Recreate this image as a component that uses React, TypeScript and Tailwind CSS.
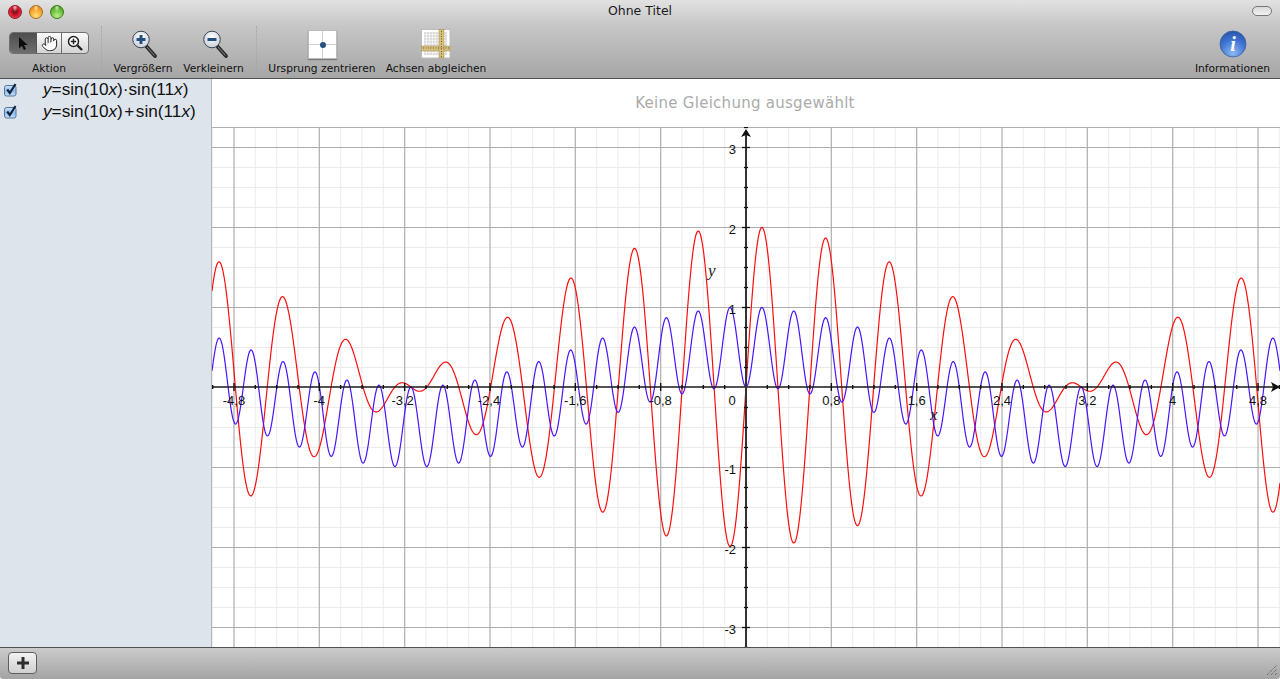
import React from "react";
import { Hand } from "lucide-react";

const X0 = 746, Y0 = 387, UX = 106.67, UY = 80;
const sx = (u: number) => X0 + u * UX;
const sy = (v: number) => Y0 - v * UY;

function curve(f: (x: number) => number) {
  const pts: string[] = [];
  for (let px = 212; px <= 1280; px += 0.5) {
    const u = (px - X0) / UX;
    pts.push(`${px.toFixed(1)},${sy(f(u)).toFixed(2)}`);
  }
  return "M" + pts.join("L");
}

const range = (a: number, b: number) => {
  const r: number[] = [];
  for (let i = a; i <= b; i++) r.push(i);
  return r;
};

function Chart() {
  const xs = range(-25, 25);
  const ys = range(-13, 13);
  const xLabels: [string, number, number][] = [
    ["-4,8", -4.8, 0], ["-4", -4, 0], ["-3,2", -3.2, -2], ["-2,4", -2.4, -1], ["-1,6", -1.6, 0], ["-0,8", -0.8, 0],
    ["0", 0, -14], ["0,8", 0.8, 0], ["1,6", 1.6, 0], ["2,4", 2.4, 0], ["3,2", 3.2, 0], ["4", 4, 0], ["4,8", 4.8, 0],
  ];
  const yLabels: [string, number][] = [["3", 3], ["2", 2], ["1", 1], ["-1", -1], ["-2", -2], ["-3", -3]];
  return (
    <svg className="block w-full h-full" viewBox="212 127 1068 520" preserveAspectRatio="none">
      <rect x="212" y="127" width="1068" height="520" fill="#ffffff" />
      {xs.filter((i) => i % 4 !== 0).map((i) => (
        <line key={i} x1={sx(i * 0.2)} x2={sx(i * 0.2)} y1="127" y2="647" stroke="#f0f0f0" strokeWidth="1.3" />
      ))}
      {ys.filter((i) => i % 4 !== 0).map((i) => (
        <line key={i} y1={sy(i * 0.25) + 0.5} y2={sy(i * 0.25) + 0.5} x1="212" x2="1280" stroke="#eaeaea" strokeWidth="1" />
      ))}
      {xs.filter((i) => i % 4 === 0 && i !== 0).map((i) => (
        <line key={i} x1={sx(i * 0.2)} x2={sx(i * 0.2)} y1="127" y2="647" stroke="#b4b4b4" strokeWidth="1.3" />
      ))}
      {ys.filter((i) => i % 4 === 0 && i !== 0).map((i) => (
        <line key={i} y1={sy(i * 0.25) + 0.5} y2={sy(i * 0.25) + 0.5} x1="212" x2="1280" stroke="#adadad" strokeWidth="1" />
      ))}
      <line x1="212" x2="1280" y1="127.5" y2="127.5" stroke="#b0b0b0" />
      <path d={curve((x) => Math.sin(10 * x) + Math.sin(11 * x))} fill="none" stroke="#ff0d0d" strokeWidth="1.2" />
      <path d={curve((x) => Math.sin(10 * x) * Math.sin(11 * x))} fill="none" stroke="#4a14ff" strokeWidth="1.2" />
      <line x1="212" x2="1276" y1="387" y2="387" stroke="#1a1a1a" strokeWidth="1.6" />
      <line x1="746" x2="746" y1="134" y2="647" stroke="#333333" strokeWidth="2" />
      {xs.filter((i) => i !== 0).map((i) => (
        <line key={i} x1={sx(i * 0.2)} x2={sx(i * 0.2)} y1={i % 4 === 0 ? 383 : 385} y2={i % 4 === 0 ? 391 : 389} stroke="#111111" strokeWidth="1.4" />
      ))}
      {ys.filter((i) => i !== 0).map((i) => (
        <line key={i} y1={sy(i * 0.25) + 0.5} y2={sy(i * 0.25) + 0.5} x1={i % 4 === 0 ? 742 : 744} x2={i % 4 === 0 ? 750 : 748} stroke="#111111" strokeWidth="1.3" />
      ))}
      <polygon points="746,129 741,137 746,135 751,137" fill="#111111" />
      <polygon points="1280,387 1271,382 1273,387 1271,392" fill="#111111" />
      <g className="font-['Liberation_Sans',Arial,sans-serif]" fontSize="13" fill="#111111">
        {xLabels.map(([t, v, dx]) => (
          <text key={t} x={sx(v) + dx} y="405" textAnchor="middle">{t}</text>
        ))}
        {yLabels.map(([t, v]) => (
          <text key={t} x="736" y={sy(v) + 7} textAnchor="end">{t}</text>
        ))}
      </g>
      <g className="font-['Liberation_Serif',serif] italic" fontSize="17" fill="#222222">
        <text x="708" y="276">y</text>
        <text x="930" y="420">x</text>
      </g>
    </svg>
  );
}

function Magnifier({ minus }: { minus?: boolean }) {
  return (
    <svg width="32" height="34" viewBox="-2 0 32 34" className="block">
      <defs>
        <radialGradient id={minus ? "gm" : "gp"} cx="50%" cy="35%" r="70%">
          <stop offset="0%" stopColor="#ffffff" />
          <stop offset="100%" stopColor="#c4ccd6" />
        </radialGradient>
      </defs>
      <line x1="17.5" y1="19.5" x2="26" y2="29" stroke="#2a2a2a" strokeWidth="3.8" strokeLinecap="round" />
      <line x1="18" y1="20" x2="25.5" y2="28.5" stroke="#8a8a8a" strokeWidth="1" />
      <circle cx="12" cy="12.5" r="8.3" fill={`url(#${minus ? "gm" : "gp"})`} stroke="#3c4654" strokeWidth="1" />
      <rect x="7.5" y="11" width="9" height="3" fill="#24507f" />
      {!minus && <rect x="10.5" y="8" width="3" height="9" fill="#24507f" />}
    </svg>
  );
}

function Item({ w, label, children }: { w: string; label: string; children?: React.ReactNode }) {
  return (
    <div className={`flex flex-col items-center ${w}`}>
      <div className="h-[36px] w-full flex items-center justify-center">{children}</div>
      <div className="text-[10.7px] leading-[14px] whitespace-nowrap text-[#111]">{label}</div>
    </div>
  );
}

function Sep() {
  return <div className="h-[46px] w-0 border-l border-dotted border-[#a4a4a4]" />;
}

function Check() {
  return (
    <svg width="15" height="15" viewBox="0 0 15 15" className="block">
      <defs>
        <linearGradient id="cb" x1="0" y1="0" x2="0" y2="1">
          <stop offset="0%" stopColor="#cfe4fa" />
          <stop offset="50%" stopColor="#8bbcec" />
          <stop offset="100%" stopColor="#c7e2fb" />
        </linearGradient>
      </defs>
      <rect x="1.5" y="3.5" width="11.5" height="10.5" rx="2" fill="url(#cb)" stroke="#54759a" strokeWidth="1" />
      <path d="M4.2 7.5 L6.8 11 L12.5 2" fill="none" stroke="#12233c" strokeWidth="2.2" />
    </svg>
  );
}

function Eq({ op }: { op: string }) {
  return (
    <div className="flex items-center h-[22px] pl-[3px]">
      <Check />
      <div className="ml-[25px] text-[17.2px] leading-[22px] whitespace-nowrap text-[#111] font-['Liberation_Sans',Arial,sans-serif]">
        <i>y</i>=sin(10<i>x</i>)<span className={op === "+" ? "px-[1.5px]" : ""}>{op}</span>sin(11<i>x</i>)
      </div>
    </div>
  );
}

export default function App() {
  return (
    <div className="w-[1280px] h-[679px] overflow-hidden rounded-b-[3px] flex flex-col bg-white font-['DejaVu_Sans',sans-serif]">
      <div className="h-[79px] shrink-0 flex flex-col border-b border-[#515151] bg-gradient-to-b from-[#e2e2e2] via-[#c8c8c8] via-30% to-[#a6a6a6]">
        <div className="h-[22px] shrink-0 flex items-center relative">
          <div className="flex items-center gap-[7px] pl-[8px] pt-[1px]">
            <div className="w-[14px] h-[14px] rounded-full border border-[#8a1a22] bg-[radial-gradient(ellipse_at_50%_12%,rgba(255,255,255,0.75),transparent_30%),radial-gradient(circle_at_50%_45%,#8c0f1f_18%,#d9182f_50%,#f0606a)]" />
            <div className="w-[14px] h-[14px] rounded-full border border-[#a8701a] bg-[radial-gradient(ellipse_at_50%_12%,rgba(255,255,255,0.75),transparent_30%),radial-gradient(circle_at_50%_85%,#ffe27a,#f59a1c_65%,#c8780f)]" />
            <div className="w-[14px] h-[14px] rounded-full border border-[#3f7a1a] bg-[radial-gradient(ellipse_at_50%_12%,rgba(255,255,255,0.75),transparent_30%),radial-gradient(circle_at_50%_85%,#b8f08a,#5fb52e_65%,#3a8a1a)]" />
          </div>
          <div className="absolute inset-x-0 top-[3px] text-center text-[12.5px] leading-[16px] text-[#1a1a1a]">Ohne Titel</div>
          <div className="absolute right-[8px] top-[6px] w-[20px] h-[10px] rounded-full border border-[#777] bg-gradient-to-b from-[#d8d8d8] to-[#f2f2f2]" />
        </div>
        <div className="flex-1 flex items-start pl-[9px] pt-[4px] pr-[10px]">
          <Item w="w-[80px]" label="Aktion">
            <div className="w-[80px] h-[22px] mt-[-2px] rounded-[4px] border border-[#6f6f6f] flex overflow-hidden bg-gradient-to-b from-[#fbfbfb] to-[#d4d4d4]">
              <div className="w-[27px] flex items-center justify-center bg-gradient-to-b from-[#4e4e4e] to-[#6e6e6e] border-r border-[#555]">
                <svg width="12" height="15" viewBox="0 0 12 15"><path d="M2 1 L2 12.5 L4.8 9.8 L7 14 L9 13 L7 9 L10.6 9 Z" fill="#0c0c0c" /></svg>
              </div>
              <div className="w-[25px] flex items-center justify-center border-r border-[#6f6f6f]">
                <Hand size={17} strokeWidth={1.4} fill="#ffffff" color="#222222" />
              </div>
              <div className="flex-1 flex items-center justify-center">
                <svg width="16" height="16" viewBox="0 0 16 16">
                  <circle cx="6.5" cy="6.5" r="5" fill="#fff" stroke="#222" strokeWidth="1.5" />
                  <path d="M10.5 10.5 L15 15" stroke="#222" strokeWidth="2.4" />
                  <path d="M6.5 3.8 V9.2 M3.8 6.5 H9.2" stroke="#222" strokeWidth="1.5" />
                </svg>
              </div>
            </div>
          </Item>
          <div className="ml-[12px]"><Sep /></div>
          <div className="ml-[11px]">
            <Item w="w-[60px]" label="Vergrößern"><Magnifier /></Item>
          </div>
          <div className="ml-[10px]">
            <Item w="w-[61px]" label="Verkleinern"><Magnifier minus /></Item>
          </div>
          <div className="ml-[12px]"><Sep /></div>
          <div className="ml-[11px]">
            <Item w="w-[108px]" label="Ursprung zentrieren">
              <div className="w-[29px] h-[29px] bg-white border border-[#bcbcbc] shadow-[0_1px_1px_#7a7a7a] relative">
                <div className="absolute left-[13px] top-0 bottom-0 w-[1px] bg-[#cfcfcf]" />
                <div className="absolute top-[13px] left-0 right-0 h-[1px] bg-[#cfcfcf]" />
                <div className="absolute left-[11px] top-[11px] w-[6px] h-[6px] rounded-full bg-[#24507f]" />
              </div>
            </Item>
          </div>
          <div className="ml-[10px]">
            <Item w="w-[100px]" label="Achsen abgleichen">
              <svg width="30" height="30" viewBox="0 0 30 30" className="block">
                <rect x="0.5" y="0.5" width="28.5" height="28.5" fill="#fff" stroke="#bcbcbc" />
                {[4, 7, 10, 13, 16, 19, 22, 25].map((v) => (
                  <g key={v} stroke="#c4c4c4" strokeWidth="0.7">
                    <line x1={v} x2={v} y1="3" y2="26" />
                    <line y1={v} y2={v} x1="3" x2="26" />
                  </g>
                ))}
                <rect x="0.5" y="17" width="28.5" height="5" fill="#d6c07c" stroke="#a08c4c" strokeWidth="0.5" />
                <rect x="18" y="0.5" width="5" height="28.5" fill="#d6c07c" stroke="#a08c4c" strokeWidth="0.5" />
                <path d="M2 19 H28 M20.5 2 V28" stroke="#6f5f2c" strokeWidth="1" strokeDasharray="1 1.5" />
              </svg>
            </Item>
          </div>
          <div className="ml-auto">
            <Item w="w-[75px]" label="Informationen">
              <svg width="28" height="28" viewBox="0 0 28 28" className="block">
                <defs>
                  <radialGradient id="inf" cx="50%" cy="85%" r="85%">
                    <stop offset="0%" stopColor="#8fb8f0" />
                    <stop offset="60%" stopColor="#3f73d2" />
                    <stop offset="100%" stopColor="#2a55a8" />
                  </radialGradient>
                </defs>
                <circle cx="14" cy="14" r="13" fill="url(#inf)" stroke="#3a5f9f" strokeWidth="0.8" />
                <text x="14" y="21" textAnchor="middle" fontSize="20" fontWeight="700" fill="#fff" className="font-['Liberation_Serif',serif] italic">i</text>
              </svg>
            </Item>
          </div>
        </div>
      </div>
      <div className="flex-1 flex min-h-0">
        <div className="w-[212px] shrink-0 bg-[#dee4ec] border-r border-[#b4b4b8]">
          <div className="mt-[-1px]">
            <Eq op="·" />
            <Eq op="+" />
          </div>
        </div>
        <div className="flex-1 flex flex-col min-w-0">
          <div className="h-[48px] shrink-0 flex items-center justify-center pr-[2px] text-[15px] text-[#ababab] tracking-[0.27px]">Keine Gleichung ausgewählt</div>
          <div className="flex-1 min-h-0"><Chart /></div>
        </div>
      </div>
      <div className="h-[32px] shrink-0 border-t border-[#515151] bg-gradient-to-b from-[#cbcbcb] to-[#a4a4a4] flex items-start pl-[8px] pt-[4px] relative">
        <div className="w-[29px] h-[22px] rounded-[4px] border border-[#5e5e5e] bg-gradient-to-b from-[#f2f2f2] to-[#cfcfcf] flex items-center justify-center">
          <svg width="14" height="14" viewBox="0 0 14 14"><path d="M7 1 V13 M1 7 H13" stroke="#2d2d2d" strokeWidth="3" /></svg>
        </div>
        <svg width="12" height="12" viewBox="0 0 12 12" className="absolute right-[2px] bottom-[3px]">
          <path d="M1 11 L11 1 M5 11 L11 5 M9 11 L11 9" stroke="#555" strokeWidth="1" strokeDasharray="1 1" />
        </svg>
      </div>
    </div>
  );
}
